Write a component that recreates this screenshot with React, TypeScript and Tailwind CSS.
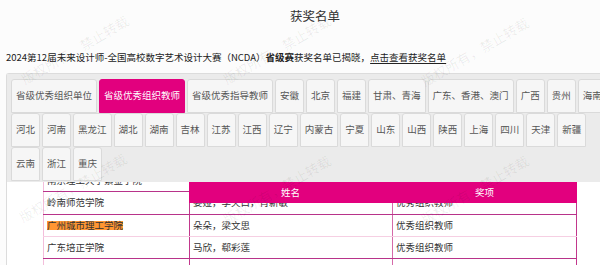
import React from "react";

const TABS = [
  "省级优秀组织单位",
  "省级优秀组织教师",
  "省级优秀指导教师",
  "安徽",
  "北京",
  "福建",
  "甘肃、青海",
  "广东、香港、澳门",
  "广西",
  "贵州",
  "海南",
  "河北",
  "河南",
  "黑龙江",
  "湖北",
  "湖南",
  "吉林",
  "江苏",
  "江西",
  "辽宁",
  "内蒙古",
  "宁夏",
  "山东",
  "山西",
  "陕西",
  "上海",
  "四川",
  "天津",
  "新疆",
  "云南",
  "浙江",
  "重庆",
];
const ACTIVE = "省级优秀组织教师";

type Row = { school: string; names: string; award: string; mark?: boolean; h: string; line: string };

const ROWS: Row[] = [
  { school: "岭南师范学院", names: "姜娅，李天白，肖新敏", award: "优秀组织教师", h: "h-[23px]", line: "border-[#b8338a]" },
  { school: "广州城市理工学院", names: "朵朵，梁文思", award: "优秀组织教师", mark: true, h: "h-[22px]", line: "border-[#f6cfe3]" },
  { school: "广东培正学院", names: "马欣，郗彩莲", award: "优秀组织教师", h: "h-[22px]", line: "border-[#b8338a]" },
  { school: "", names: "", award: "", h: "h-[23px]", line: "border-[#b8338a]" },
];

// watermark centres, page coords
const MARKS: [number, number][] = [
  [75, 50],
  [277, 50],
  [475, 52],
  [73, 188],
  [277, 190],
  [475, 190],
];

function Cells({ a, b, c, mark }: { a: string; b: string; c: string; mark?: boolean }) {
  return (
    <>
      <div className="flex items-center border-l border-[#f3bedb] pl-[3px]">
        <span className={mark ? "bg-[#ff9632]" : ""}>{a}</span>
      </div>
      <div className="flex items-center border-l border-[#c2378c] pl-[3px]">{b}</div>
      <div className="flex items-center border-x border-l-[#d56aa9] border-r-[#c2378c] pl-[3px]">{c}</div>
    </>
  );
}

export default function App() {
  return (
    <div className="relative h-[265px] w-[600px] overflow-hidden bg-[#fcfcfc] font-['Noto_Sans_CJK_SC',sans-serif] text-[#333]">
      <div className="w-[630px]">
        <div className="flex h-[32px] items-center justify-center text-[12.5px] leading-none text-[#333]">获奖名单</div>

        <div className="mt-[16px] flex h-[20px] items-center pl-[6px] text-[9.5px] leading-none text-[#222]">
          2024第12届未来设计师-全国高校数字艺术设计大赛（NCDA）
          <b className="font-bold">省级赛</b>
          获奖名单已揭晓，
          <span className="underline underline-offset-2">点击查看获奖名单</span>
        </div>

        <div className="ml-[6px] mt-[5px] w-[611px] rounded-t-[3px] border-l border-t border-[#dcdcdc] bg-white">
          <div className="flex flex-wrap bg-[#ebebeb] pl-[4px] pr-[4px] pt-[5px] pb-[1px]">
            {TABS.map((t) => {
              const on = t === ACTIVE;
              return (
                <div
                  key={t}
                  className={
                    on
                      ? "mr-[2px] flex h-[34px] items-center rounded-t-[3px] border border-[#e2007e] bg-[#e2007e] px-[4px] text-[9.5px] leading-none whitespace-nowrap text-white"
                      : "mr-[2px] flex h-[34px] items-center rounded-t-[3px] border border-[#dadada] bg-[#f6f6f6] px-[4px] text-[9.5px] leading-none whitespace-nowrap text-[#555]"
                  }
                >
                  {t}
                </div>
              );
            })}
          </div>

          <div className="relative ml-[36px] h-[90px] w-[534px] bg-white text-[9.5px] leading-none">
            <div className="grid h-[10px] grid-cols-[146px_203px_185px] overflow-hidden border-b border-[#b8338a]">
              <div className="-mt-[13px] flex h-[23px] items-center border-l border-[#f3bedb] pl-[3px]">南京理工大学紫金学院</div>
              <div className="border-l border-[#c2378c]" />
              <div className="border-x border-l-[#d56aa9] border-r-[#c2378c]" />
            </div>
            {ROWS.map((r, i) => (
              <div key={i} className={`grid grid-cols-[146px_203px_185px] border-b ${r.h} ${r.line}`}>
                <Cells a={r.school} b={r.names} c={r.award} mark={r.mark} />
              </div>
            ))}

            <div className="absolute left-[146px] top-0 grid h-[21px] w-[388px] grid-cols-[203px_185px] bg-[#e2007e] text-white">
              <div className="flex items-center justify-center">姓名</div>
              <div className="flex items-center justify-center">奖项</div>
            </div>
          </div>
        </div>
      </div>

      {MARKS.map(([x, y], i) => (
        <div
          key={i}
          style={{ left: x, top: y }}
          className="pointer-events-none absolute -translate-x-1/2 -translate-y-1/2 -rotate-[30deg] whitespace-nowrap text-[13.5px] leading-none text-black/[0.07]"
        >
          版权所有，禁止转载
        </div>
      ))}
    </div>
  );
}
